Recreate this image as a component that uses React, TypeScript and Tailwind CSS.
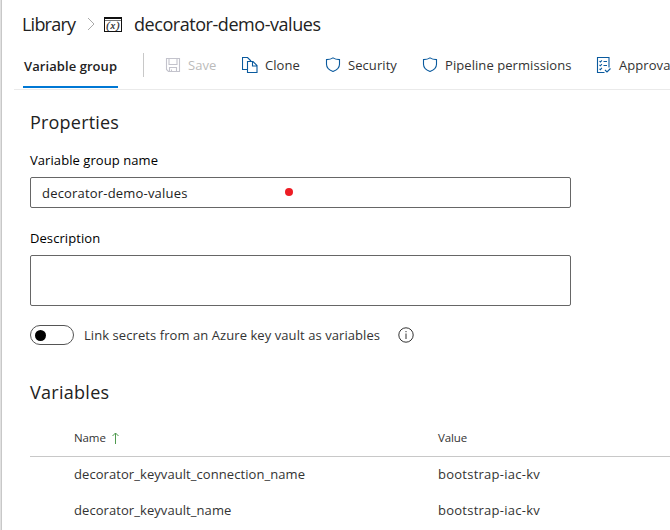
import React from "react";

function ShieldIcon() {
  return (
    <svg width="16" height="16" viewBox="0 0 16 16" fill="none" stroke="#0a5a9e" strokeWidth="1.1" className="shrink-0">
      <path d="M8 .9C6.400 2.100 3.800 2.600 1.500 2.600v4.600C1.500 10.800 4.700 13.200 8 14.500c3.300-1.300 6.500-3.700 6.500-7.300V2.600C12.200 2.600 9.600 2.100 8 .9z" />
    </svg>
  );
}

function SaveIcon() {
  return (
    <svg width="16" height="16" viewBox="0 0 16 16" fill="none" stroke="#c3c3cc" strokeWidth="1.1" className="-mt-px shrink-0">
      <path d="M1.500 1.500h13v13H3.500l-2-2zM4 1.500v6h8v-6M4.500 14.500v-4h7v4M6.500 14.500v-2" />
    </svg>
  );
}

function CloneIcon() {
  return (
    <svg width="16" height="16" viewBox="0 0 16 16" fill="none" stroke="#0a5a9e" strokeWidth="1.1" className="-mt-px shrink-0">
      <path d="M5.500 12.500h-5v-12h5l3.500 3.500" />
      <path d="M5.500 4.500h5.500l4 4v7H5.500zM10.500 4.500v4.500H15" />
    </svg>
  );
}

function ChecklistIcon() {
  return (
    <svg width="16" height="16" viewBox="0 0 16 16" fill="none" stroke="#0a5a9e" strokeWidth="1.1" className="-mt-px shrink-0">
      <path d="M8.500 15.500H1.500V.500h11.500v10" />
      <path d="M3.500 4.200l.9.800 1.500-1.700M3.500 8l.9.800 1.500-1.700M3.500 11.800l.9.800 1.500-1.700M7.500 4.500h3.500M7.500 8.500h3.500M9 13l2 2 3.500-3.500" />
    </svg>
  );
}

function VariableGroupIcon() {
  return (
    <svg width="18" height="15" viewBox="0 0 18 15" className="shrink-0">
      <rect x=".5" y=".5" width="17" height="14" fill="#fff" stroke="#111" />
      <path d="M0 1h18" stroke="#111" strokeWidth="2" />
      <path d="M1 3.500h16" stroke="#777" />
      <text x="9.300" y="11.500" textAnchor="middle" fontSize="10.500" fontStyle="italic" letterSpacing=".8" fontFamily="Liberation Serif, serif" fill="#222" stroke="#222" strokeWidth=".2">(x)</text>
    </svg>
  );
}

const variables = [
  { name: "decorator_keyvault_connection_name", value: "bootstrap-iac-kv" },
  { name: "decorator_keyvault_name", value: "bootstrap-iac-kv" },
];

export default function App() {
  return (
    <div className="flex h-[530px] w-[670px] overflow-hidden bg-white font-['Open_Sans',sans-serif] text-[13px] leading-5 tracking-[0.07px] whitespace-nowrap text-[#333]">
      <div className="w-[2px] shrink-0 border-r border-[#c8c8c8] bg-[#e1e1e1]" />
      <main className="min-w-0 flex-1">
        <header className="flex h-[49px] items-center pb-px pl-5 text-[18px] text-[#222]">
          <span className="w-[65px] tracking-[-0.78px]">Library</span>
          <svg width="8" height="14" viewBox="0 0 8 14" fill="none" stroke="#aaa" className="mr-[9px]"><path d="M1 1l6 6-6 6" /></svg>
          <VariableGroupIcon />
          <h1 className="ml-3 tracking-[-0.45px]">decorator-demo-values</h1>
        </header>
        <nav className="ml-3 flex h-[41px] border-b border-[#eaeaea] pl-[9px]">
          <div className="h-[39px] w-[95px] shrink-0 border-b-2 border-[#0078d4] pt-[7px] pl-px font-semibold text-[#222]">Variable group</div>
          <div className="mt-1 ml-[25px] h-6 w-px shrink-0 bg-[#c8c8c8]" />
          <div className="ml-[21px] flex h-8 items-center">
            <div className="flex w-[77px] shrink-0 items-center gap-[7px] text-[#bbb]"><SaveIcon /><span>Save</span></div>
            <div className="flex w-[83px] shrink-0 items-center gap-[7px]"><CloneIcon /><span>Clone</span></div>
            <div className="flex w-[97px] shrink-0 items-center gap-[7px]"><ShieldIcon /><span>Security</span></div>
            <div className="flex w-[174px] shrink-0 items-center gap-[7px]"><ShieldIcon /><span>Pipeline permissions</span></div>
            <div className="flex shrink-0 items-center gap-[7px]"><ChecklistIcon /><span>Approvals</span></div>
          </div>
        </nav>
        <section className="pl-7">
          <h2 className="pt-[18px] text-[18px] leading-7 tracking-[0.2px] text-[#222]">Properties</h2>
          <label className="mt-[14px] block text-black">Variable group name</label>
          <div className="mt-[7px] flex h-[31px] w-[541px] items-center rounded-[2px] border border-[#666] pl-[11px] text-[#222]">
            <span className="w-[243px] tracking-[0.19px]">decorator-demo-values</span>
            <span className="-mt-px size-2 rounded-full bg-[#ed1c24]" />
          </div>
          <label className="mt-5 block text-black">Description</label>
          <div className="mt-[7px] h-[51px] w-[541px] rounded-[2px] border border-[#666]" />
          <div className="mt-[19px] flex h-5 items-center">
            <div className="flex h-5 w-11 items-center rounded-full border border-[#555] pl-1"><span className="size-[11px] rounded-full bg-black" /></div>
            <span className="ml-[10px] w-[314px]">Link secrets from an Azure key vault as variables</span>
            <svg width="16" height="16" viewBox="0 0 16 16" fill="none" stroke="#333"><circle cx="8" cy="8" r="7.200" /><path d="M8 6.500V12M8 4v1.200" /></svg>
          </div>
        </section>
        <section className="pl-7">
          <h2 className="pt-[33px] text-[18px] leading-7 tracking-[0.28px] text-[#222]">Variables</h2>
          <div className="mt-[13px] flex h-[38px] items-center border-b border-[#c8c8c8] pl-[44px] text-[11.500px] tracking-[-0.1px]">
            <div className="flex w-[364px] items-center gap-[6px]"><span>Name</span>
              <svg width="7" height="12" viewBox="0 0 7 12" fill="none" stroke="#4f9a4f"><path d="M3.500 12V1M.500 4l3-3 3 3" /></svg>
            </div>
            <span>Value</span>
          </div>
          {variables.map((v) => (
            <div key={v.name} className="flex h-9 items-center pb-[2px] pl-[44px]">
              <span className="w-[364px]">{v.name}</span>
              <span className="tracking-[0.25px]">{v.value}</span>
            </div>
          ))}
        </section>
      </main>
    </div>
  );
}
